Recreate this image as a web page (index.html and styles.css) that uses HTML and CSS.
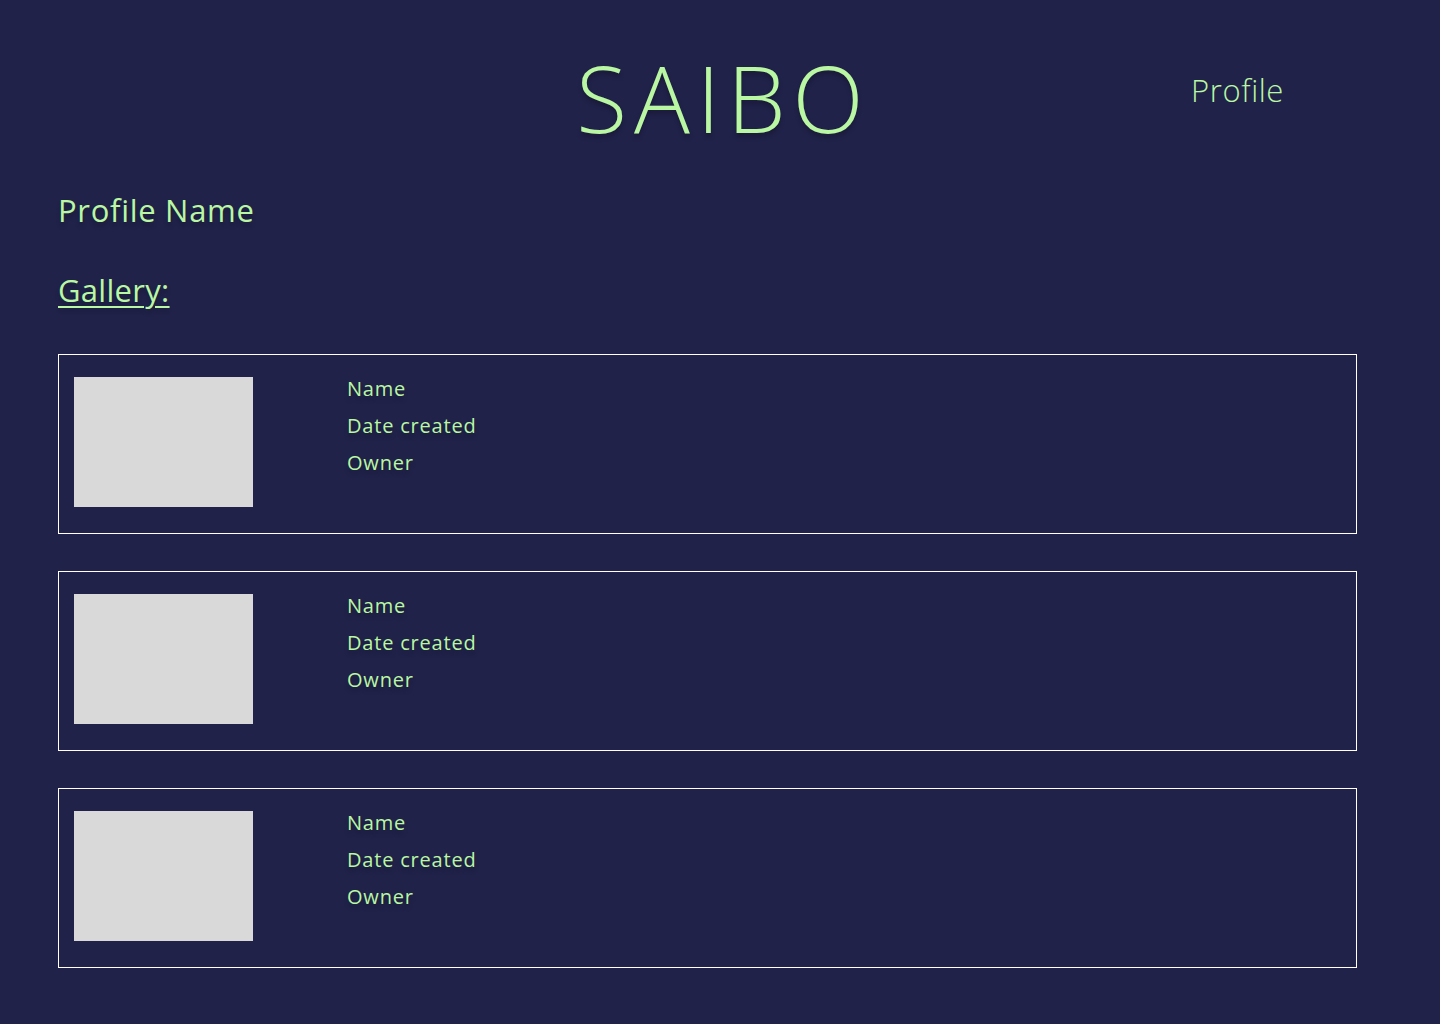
FILE: index.html
```html
<!DOCTYPE html>
<html lang="en">
<head>
<meta charset="utf-8">
<title>SAIBO</title>
<link rel="stylesheet" href="styles.css">
</head>
<body>
<header class="site-header">
  <div class="spacer"></div>
  <h1 class="logo">SAIBO</h1>
  <nav class="nav"><a class="nav-link" href="#">Profile</a></nav>
</header>
<main class="content">
  <h2 class="profile-name">Profile Name</h2>
  <h3 class="gallery-title">Gallery:</h3>
  <section class="gallery">
    <article class="card">
      <div class="thumb"></div>
      <ul class="meta">
        <li>Name</li>
        <li>Date created</li>
        <li>Owner</li>
      </ul>
    </article>
    <article class="card">
      <div class="thumb"></div>
      <ul class="meta">
        <li>Name</li>
        <li>Date created</li>
        <li>Owner</li>
      </ul>
    </article>
    <article class="card">
      <div class="thumb"></div>
      <ul class="meta">
        <li>Name</li>
        <li>Date created</li>
        <li>Owner</li>
      </ul>
    </article>
  </section>
</main>
</body>
</html>
```
FILE: styles.css
```css
html, body {
  margin: 0;
  padding: 0;
}
body {
  background: #21224a;
  color: #b9f7a3;
  font-family: "Open Sans", "DejaVu Sans", sans-serif;
  min-height: 1024px;
}
.site-header {
  display: grid;
  grid-template-columns: 1fr auto 1fr;
  align-items: start;
  height: 180px;
}
.logo {
  margin: 0;
  padding-top: 47px;
  font-size: 93px;
  font-weight: 300;
  line-height: 100px;
  letter-spacing: 7px;
  text-indent: 7px;
  text-shadow: 0 4px 4px rgba(0,0,0,0.25);
}
.nav {
  display: flex;
  justify-content: flex-end;
  padding-top: 70px;
  padding-right: 156px;
}
.nav-link {
  color: #b9f7a3;
  text-decoration: none;
  font-size: 31px;
  font-weight: 300;
  line-height: 40px;
  letter-spacing: 0.6px;
}
.content {
  padding: 0 83px 0 58px;
}
.profile-name {
  margin: 0;
  font-size: 31px;
  font-weight: 400;
  line-height: 60px;
  letter-spacing: 0.7px;
  text-shadow: 0 4px 4px rgba(0,0,0,0.25);
}
.gallery-title {
  margin: 28px 0 0;
  font-size: 31px;
  font-weight: 400;
  line-height: 44px;
  letter-spacing: 0.3px;
  text-decoration: underline;
  text-underline-offset: 4px;
  text-decoration-thickness: 1.5px;
  text-shadow: 0 4px 4px rgba(0,0,0,0.25);
}
.gallery {
  display: flex;
  flex-direction: column;
  gap: 37px;
  margin-top: 42px;
}
.card {
  display: flex;
  align-items: flex-start;
  height: 180px;
  box-sizing: border-box;
  border: 1px solid #ffffff;
  padding: 22px 15px;
}
.thumb {
  width: 179px;
  height: 130px;
  background: #d9d9d9;
  flex: none;
}
.meta {
  list-style: none;
  margin: 0 0 0 94px;
  padding: 0;
  display: flex;
  flex-direction: column;
  gap: 13px;
}
.meta li {
  font-size: 20px;
  line-height: 24px;
  letter-spacing: 0.8px;
  text-shadow: 0 4px 4px rgba(0,0,0,0.25);
}
```
